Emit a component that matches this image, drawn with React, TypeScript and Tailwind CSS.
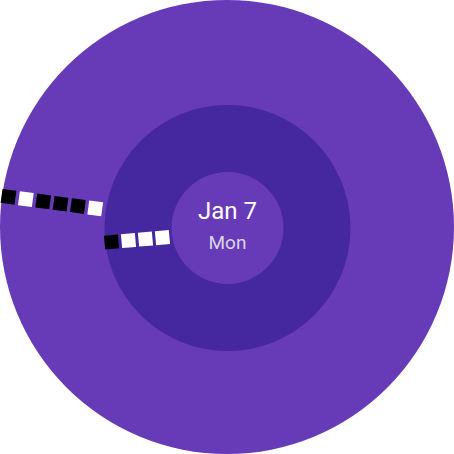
import React from "react";

type Sq = { x: number; y: number; c: string };

function hand(x0: number, y0: number, angDeg: number, pitch: number, colors: string[]): Sq[] {
  const a = (angDeg * Math.PI) / 180;
  return colors.map((c, i) => ({ x: x0 + Math.cos(a) * pitch * i, y: y0 + Math.sin(a) * pitch * i, c }));
}

export default function App() {
  const outer = hand(8.5, 196.8, 7.6, 17.5, ["#000", "#fff", "#000", "#000", "#000", "#fff"]);
  const inner = hand(111.5, 242, -5, 17.05, ["#000", "#fff", "#fff", "#fff"]);
  const s = 14;
  return (
    <div className="relative w-[454px] h-[454px] bg-white overflow-hidden" style={{ fontFamily: "Roboto, 'Noto Sans', sans-serif" }}>
      <div className="w-[454px] h-[454px] rounded-full bg-[#673ab7] flex items-center justify-center">
        <div className="w-[246px] h-[246px] rounded-full bg-[#4527a0] flex items-center justify-center translate-x-[0.5px] translate-y-[1px]">
          <div className="w-[112px] h-[112px] rounded-full bg-[#673ab7] flex flex-col items-center pt-[25px]">
            <div className="text-[24px] leading-[28px] text-white">Jan 7</div>
            <div className="text-[19px] leading-[24px] text-[#dcd6e6] mt-[6px]">Mon</div>
          </div>
        </div>
      </div>
      <svg className="absolute left-0 top-0" width="454" height="454" viewBox="0 0 454 454">
        <g>
          {outer.map((q, i) => (
            <rect key={"o" + i} x={-s / 2} y={-s / 2} width={s} height={s} fill={q.c} transform={`translate(${q.x} ${q.y}) rotate(7.6)`} />
          ))}
          {inner.map((q, i) => (
            <rect key={"i" + i} x={-s / 2} y={-s / 2} width={s} height={s} fill={q.c} transform={`translate(${q.x} ${q.y}) rotate(-5)`} />
          ))}
        </g>
      </svg>
    </div>
  );
}
